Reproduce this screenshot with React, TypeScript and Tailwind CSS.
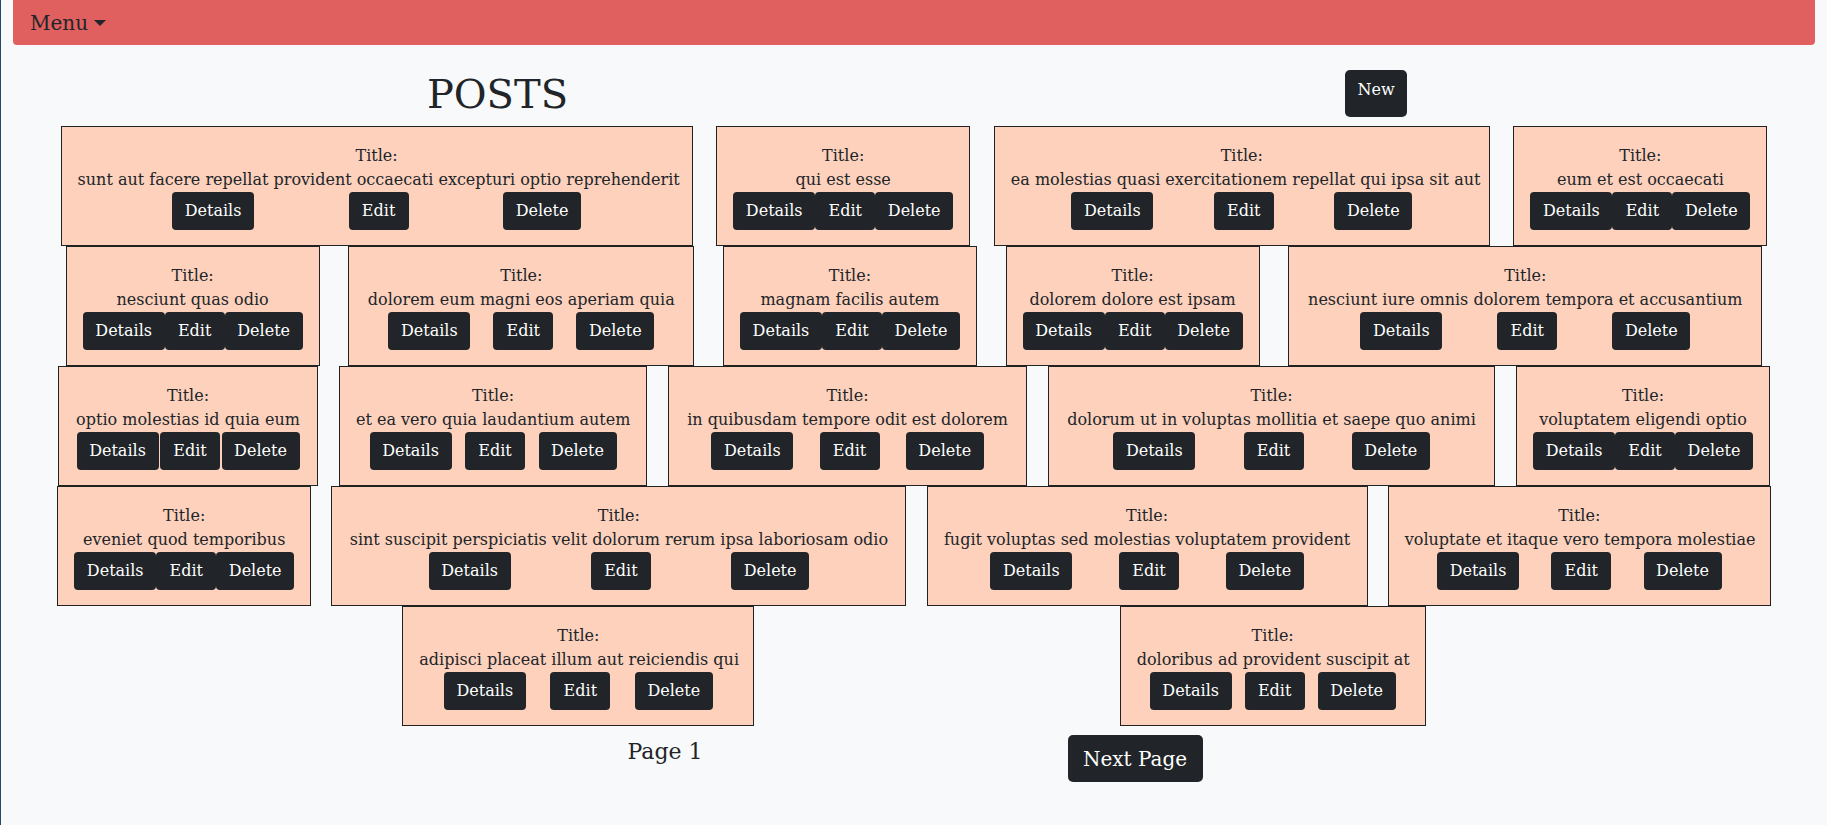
import React from "react";

type Post = { title: string; w: string };

const rows: Post[][] = [
  [
    { title: "sunt aut facere repellat provident occaecati excepturi optio reprehenderit", w: "w-[632px]" },
    { title: "qui est esse", w: "w-[254px]" },
    { title: "ea molestias quasi exercitationem repellat qui ipsa sit aut", w: "w-[496px]" },
    { title: "eum et est occaecati", w: "w-[254px]" },
  ],
  [
    { title: "nesciunt quas odio", w: "w-[254px]" },
    { title: "dolorem eum magni eos aperiam quia", w: "w-[346px]" },
    { title: "magnam facilis autem", w: "w-[254px]" },
    { title: "dolorem dolore est ipsam", w: "w-[254px]" },
    { title: "nesciunt iure omnis dolorem tempora et accusantium", w: "w-[474px]" },
  ],
  [
    { title: "optio molestias id quia eum", w: "w-[260px]" },
    { title: "et ea vero quia laudantium autem", w: "w-[308px]" },
    { title: "in quibusdam tempore odit est dolorem", w: "w-[359px]" },
    { title: "dolorum ut in voluptas mollitia et saepe quo animi", w: "w-[447px]" },
    { title: "voluptatem eligendi optio", w: "w-[254px]" },
  ],
  [
    { title: "eveniet quod temporibus", w: "w-[254px]" },
    { title: "sint suscipit perspiciatis velit dolorum rerum ipsa laboriosam odio", w: "w-[575px]" },
    { title: "fugit voluptas sed molestias voluptatem provident", w: "w-[441px]" },
    { title: "voluptate et itaque vero tempora molestiae", w: "w-[383px]" },
  ],
  [
    { title: "adipisci placeat illum aut reiciendis qui", w: "w-[352px]" },
    { title: "doloribus ad provident suscipit at", w: "w-[306px]" },
  ],
];

function Btn({ label, w }: { label: string; w: string }) {
  return (
    <button
      className={`${w} h-[38px] shrink-0 rounded-[4px] bg-[#212529] text-white text-[16px] leading-6 flex items-center justify-center whitespace-nowrap`}
    >
      {label}
    </button>
  );
}

function Card({ post }: { post: Post }) {
  return (
    <div
      className={`${post.w} h-[120px] shrink-0 border border-[#222] bg-[#fdd1bc] pt-[17px] pb-[15px] px-4 flex flex-col items-stretch text-center text-[#212529]`}
    >
      <div className="leading-6 text-[16px] whitespace-nowrap">Title:</div>
      <div className="leading-6 text-[16px] whitespace-nowrap">{post.title}</div>
      <div className="flex justify-evenly">
        <Btn label="Details" w="w-[82px]" />
        <Btn label="Edit" w="w-[60px]" />
        <Btn label="Delete" w="w-[78px]" />
      </div>
    </div>
  );
}

export default function App() {
  return (
    <div className="min-h-[825px] w-full bg-[#f8f9fa] border-l border-[#27496a] font-['DejaVu_Serif',serif] text-[#212529]">
      <nav className="ml-[12px] mr-[12px] h-[45px] rounded-b-[4px] bg-[#e06060] flex items-center pl-[17px]">
        <span className="text-[20px] leading-[30px] text-[#212529] flex items-center">
          Menu
          <span className="ml-[6px] w-0 h-0 border-l-[6px] border-r-[6px] border-t-[6px] border-l-transparent border-r-transparent border-t-[#212529]" />
        </span>
      </nav>

      <div className="h-[81px] flex items-start">
        <div className="ml-[57px] w-[879px] pt-[25px] flex justify-center">
          <h1 className="text-[40px] leading-[48px]">POSTS</h1>
        </div>
        <div className="w-[878px] pt-[25px] flex justify-center">
          <button className="w-[62px] h-[47px] rounded-[5px] bg-[#212529] text-white text-[16px] leading-6 pt-[8px] flex justify-center items-start">
            New
          </button>
        </div>
      </div>

      <div className="px-[36px] flex flex-col">
        {rows.map((row, i) => (
          <div key={i} className="flex justify-evenly">
            {row.map((p) => (
              <Card key={p.title} post={p} />
            ))}
          </div>
        ))}
      </div>

      <div className="mt-[9px] flex items-start">
        <div className="ml-[429px] w-[470px] pt-[4px] text-center text-[22px] leading-[26px]">Page 1</div>
        <div className="w-[470px] flex justify-center">
          <button className="w-[135px] h-[47px] rounded-[5px] bg-[#212529] text-white text-[20px] leading-[30px] flex items-center justify-center">
            Next Page
          </button>
        </div>
      </div>
    </div>
  );
}
